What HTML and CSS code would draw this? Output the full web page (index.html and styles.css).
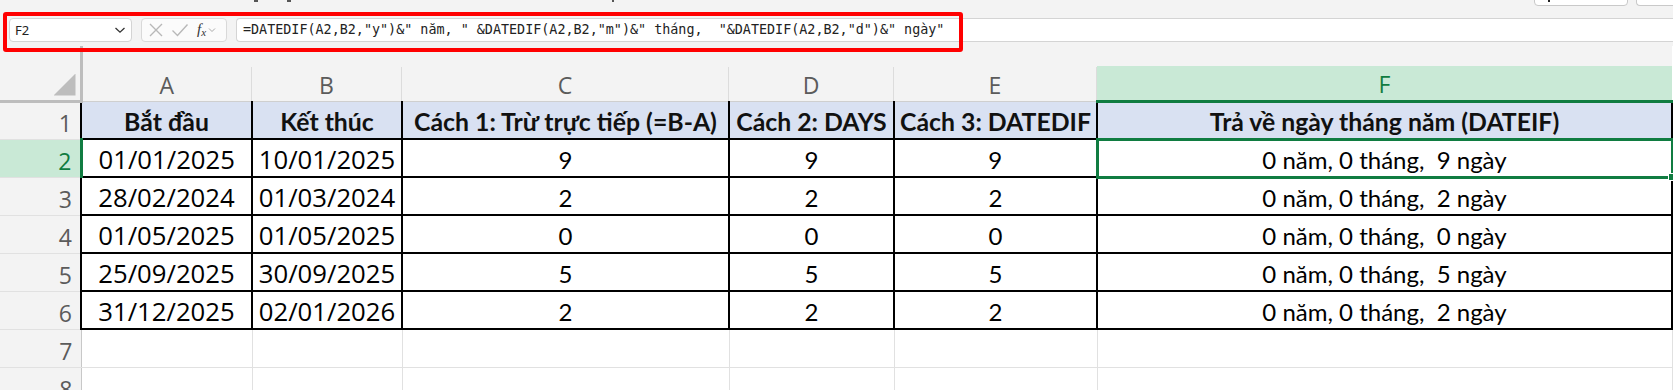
FILE: index.html
```html
<!DOCTYPE html>
<html lang="vi">
<head>
<meta charset="utf-8">
<title>DATEDIF</title>
<link rel="stylesheet" href="styles.css">
</head>
<body>
<div class="app">
  <div class="toolbar">
    <div class="peek">
      <div class="peek-marks">
        <i class="mark m1"></i><i class="mark m2"></i><i class="mark m3"></i>
      </div>
      <div class="peek-buttons">
        <div class="peek-btn"><i class="peek-ico"></i></div>
        <div class="peek-btn last"></div>
      </div>
    </div>
    <div class="fbar">
      <div class="namebox">
        <span class="nb-text">F2</span>
        <svg class="nb-chev" width="12" height="8" viewBox="0 0 12 8"><path d="M1.5 2 L6 6.2 L10.5 2" fill="none" stroke="#333" stroke-width="1.3"/></svg>
      </div>
      <div class="fxbox">
        <svg class="ico" width="16" height="16" viewBox="0 0 16 16"><path d="M2 2 L14 14 M14 2 L2 14" stroke="#b8b8b8" stroke-width="1.4" fill="none"/></svg>
        <svg class="ico" width="18" height="16" viewBox="0 0 18 16"><path d="M1.5 8.5 L6.5 13.5 L16.5 2.5" stroke="#b8b8b8" stroke-width="1.4" fill="none"/></svg>
        <span class="fx">f<sub>x</sub></span>
        <svg class="fx-chev" width="8" height="6" viewBox="0 0 8 6"><path d="M1 1.5 L4 4.5 L7 1.5" fill="none" stroke="#aaa" stroke-width="1"/></svg>
      </div>
      <div class="formula">=DATEDIF(A2,B2,"y")&amp;" năm, " &amp;DATEDIF(A2,B2,"m")&amp;" tháng,  "&amp;DATEDIF(A2,B2,"d")&amp;" ngày"</div>
      <div class="highlight"></div>
    </div>
  </div>

  <table class="sheet">
    <colgroup>
      <col class="w-rh"><col class="w-a"><col class="w-b"><col class="w-c"><col class="w-d"><col class="w-e"><col class="w-f">
    </colgroup>
    <tr class="colhdr">
      <th class="corner"><div class="tri"></div></th>
      <th><div class="lbl">A</div></th>
      <th><div class="lbl">B</div></th>
      <th><div class="lbl">C</div></th>
      <th><div class="lbl">D</div></th>
      <th><div class="lbl">E</div></th>
      <th class="csel"><div class="lbl">F</div></th>
    </tr>
    <tr class="row first">
      <th class="rh">1</th>
      <td class="hd">Bắt đầu</td>
      <td class="hd">Kết thúc</td>
      <td class="hd">Cách 1: Trừ trực tiếp (=B-A)</td>
      <td class="hd">Cách 2: DAYS</td>
      <td class="hd">Cách 3: DATEDIF</td>
      <td class="hd">Trả về ngày tháng năm (DATEIF)</td>
    </tr>
    <tr class="row">
      <th class="rh rsel">2</th>
      <td class="dt">01/01/2025</td>
      <td class="dt">10/01/2025</td>
      <td class="nm">9</td>
      <td class="nm">9</td>
      <td class="nm">9</td>
      <td class="nm active">0 năm, 0 tháng,&nbsp; 9 ngày<span class="handle"></span></td>
    </tr>
    <tr class="row">
      <th class="rh">3</th>
      <td class="dt">28/02/2024</td>
      <td class="dt">01/03/2024</td>
      <td class="nm">2</td>
      <td class="nm">2</td>
      <td class="nm">2</td>
      <td class="nm">0 năm, 0 tháng,&nbsp; 2 ngày</td>
    </tr>
    <tr class="row">
      <th class="rh">4</th>
      <td class="dt">01/05/2025</td>
      <td class="dt">01/05/2025</td>
      <td class="nm">0</td>
      <td class="nm">0</td>
      <td class="nm">0</td>
      <td class="nm">0 năm, 0 tháng,&nbsp; 0 ngày</td>
    </tr>
    <tr class="row">
      <th class="rh">5</th>
      <td class="dt">25/09/2025</td>
      <td class="dt">30/09/2025</td>
      <td class="nm">5</td>
      <td class="nm">5</td>
      <td class="nm">5</td>
      <td class="nm">0 năm, 0 tháng,&nbsp; 5 ngày</td>
    </tr>
    <tr class="row">
      <th class="rh">6</th>
      <td class="dt">31/12/2025</td>
      <td class="dt">02/01/2026</td>
      <td class="nm">2</td>
      <td class="nm">2</td>
      <td class="nm">2</td>
      <td class="nm">0 năm, 0 tháng,&nbsp; 2 ngày</td>
    </tr>
    <tr class="row">
      <th class="rh">7</th>
      <td class="em"></td><td class="em"></td><td class="em"></td><td class="em"></td><td class="em"></td><td class="em"></td>
    </tr>
    <tr class="row">
      <th class="rh">8</th>
      <td class="em"></td><td class="em"></td><td class="em"></td><td class="em"></td><td class="em"></td><td class="em"></td>
    </tr>
  </table>
</div>
</body>
</html>
```

FILE: styles.css
```css
html, body {
  margin: 0;
  padding: 0;
  background: #f3f3f3;
  overflow: hidden;
}
.app {
  width: 1673px;
  height: 390px;
  overflow: hidden;
  font-family: "Open Sans", "Noto Sans", sans-serif;
}

/* ---------- toolbar ---------- */
.toolbar {
  height: 46px;
  background: #f3f3f3;
}
.peek {
  height: 18px;
  display: flex;
  align-items: flex-start;
  overflow: hidden;
}
.peek-marks {
  display: flex;
  align-items: flex-start;
}
.mark {
  display: block;
  height: 2px;
  background: #555;
}
.m1 { width: 4px; margin-left: 254px; }
.m2 { width: 4px; margin-left: 29px; }
.m3 { width: 2px; margin-left: 321px; }
.peek-buttons {
  margin-left: auto;
  display: flex;
  gap: 8px;
}
.peek-btn {
  width: 94px;
  height: 28px;
  margin-top: -22px;
  box-sizing: border-box;
  background: #fff;
  border: 1px solid #c9c9c9;
  border-radius: 4px;
  display: flex;
  align-items: flex-end;
}
.peek-btn.last {
  width: 37px;
  border-top-right-radius: 0;
  border-bottom-right-radius: 0;
  border-right: none;
}
.peek-ico {
  width: 2px;
  height: 3px;
  margin-left: 13px;
  margin-bottom: 3px;
  background: #222;
}

.fbar {
  position: relative;
  height: 24px;
  display: flex;
}
.namebox {
  margin-left: 9px;
  width: 123px;
  box-sizing: border-box;
  background: #fff;
  border: 1px solid #d4d4d4;
  border-radius: 4px;
  display: flex;
  align-items: center;
  padding: 0 5px 0 5px;
}
.nb-text {
  font-family: "Noto Sans", sans-serif;
  font-size: 13px;
  color: #222;
  flex: 1;
}
.nb-chev {
  display: block;
}
.fxbox {
  margin-left: 9px;
  width: 86px;
  box-sizing: border-box;
  background: #fbfbfb;
  border: 1px solid #d9d9d9;
  border-radius: 4px;
  display: flex;
  align-items: center;
  padding-left: 6px;
  gap: 7px;
}
.ico {
  display: block;
}
.fx {
  font-family: "Liberation Serif", serif;
  font-style: italic;
  font-size: 15px;
  color: #333;
  line-height: 1;
  margin-left: 1px;
}
.fx sub {
  font-size: 11px;
  vertical-align: -2px;
}
.fx-chev {
  display: block;
  margin-left: -5px;
}
.formula {
  margin-left: 9px;
  flex: 1;
  background: #fff;
  border: 1px solid #d4d4d4;
  border-right: none;
  border-radius: 4px 0 0 4px;
  font-family: "DejaVu Sans Mono", "Liberation Mono", monospace;
  font-size: 13.4px;
  line-height: 22px;
  color: #222;
  padding-left: 6px;
  white-space: pre;
}
.highlight {
  position: absolute;
  left: 3px;
  top: -6px;
  width: 960px;
  height: 40px;
  box-sizing: border-box;
  border: 4px solid #ff0000;
  border-radius: 3px;
  pointer-events: none;
}

/* ---------- sheet ---------- */
.sheet {
  border-collapse: collapse;
  table-layout: fixed;
  width: 1672px;
  background: #fff;
}
.w-rh { width: 81px; }
.w-a { width: 171px; }
.w-b { width: 150px; }
.w-c { width: 327px; }
.w-d { width: 165px; }
.w-e { width: 203px; }
.w-f { width: 575px; }

.colhdr {
  height: 55px;
}
.colhdr th {
  padding: 0;
  background: #f3f3f3;
  vertical-align: bottom;
  border-bottom: 1px solid #cfcfcf;
  font-weight: normal;
}
.colhdr .lbl {
  height: 34px;
  line-height: 36px;
  border-right: 1px solid #dcdcdc;
  text-align: center;
  font-family: "Open Sans", sans-serif;
  font-size: 23px;
  color: #5b5b5b;
}
.colhdr th.corner {
  border-right: 3px solid #bdbdbd;
  border-bottom: 3px solid #bdbdbd;
  text-align: right;
  padding: 0 4px 4px 0;
}
.tri {
  display: inline-block;
  width: 22px;
  height: 22px;
  background: #bdbdbd;
  clip-path: polygon(100% 0, 100% 100%, 0 100%);
  vertical-align: bottom;
}
.colhdr th.csel {
  border-bottom: 3px solid #107c41;
}
.colhdr th.csel .lbl {
  background: #c9e9d6;
  color: #107c41;
  border-right: none;
}

.row {
  height: 38px;
}
.rh {
  background: #f3f3f3;
  border-right: 1px solid #c8c8c8;
  border-bottom: 1px solid #e1e1e1;
  text-align: right;
  padding: 0 8px 0 0;
  vertical-align: bottom;
  font-family: "Open Sans", sans-serif;
  font-weight: normal;
  font-size: 23px;
  line-height: 32px;
  color: #5b5b5b;
}
.rh.rsel {
  background: #c9e9d6;
  color: #107c41;
  border-right: 3px solid #107c41;
}
td {
  padding: 0 2px 2px;
  vertical-align: bottom;
  text-align: center;
  white-space: nowrap;
  overflow: visible;
  color: #000;
  line-height: 28px;
}
td.hd, td.dt, td.nm {
  border: 2px solid #000;
}
.row.first td.hd {
  border-top: none;
}
td.hd {
  background: #d9e1f2;
  font-family: "Lato", sans-serif;
  font-weight: bold;
  font-size: 24.8px;
  color: #111;
}
td.dt {
  font-family: "Open Sans", sans-serif;
  font-size: 25.7px;
}
td.nm {
  font-family: "Lato", sans-serif;
  font-size: 24px;
}
td.em {
  border-right: 1px solid #e1e1e1;
  border-bottom: 1px solid #e1e1e1;
}
td.active {
  position: relative;
  border: 3px solid #107c41;
}
.handle {
  position: absolute;
  right: -5px;
  bottom: -5px;
  width: 6px;
  height: 6px;
  background: #107c41;
  border: 1px solid #fff;
}
```
